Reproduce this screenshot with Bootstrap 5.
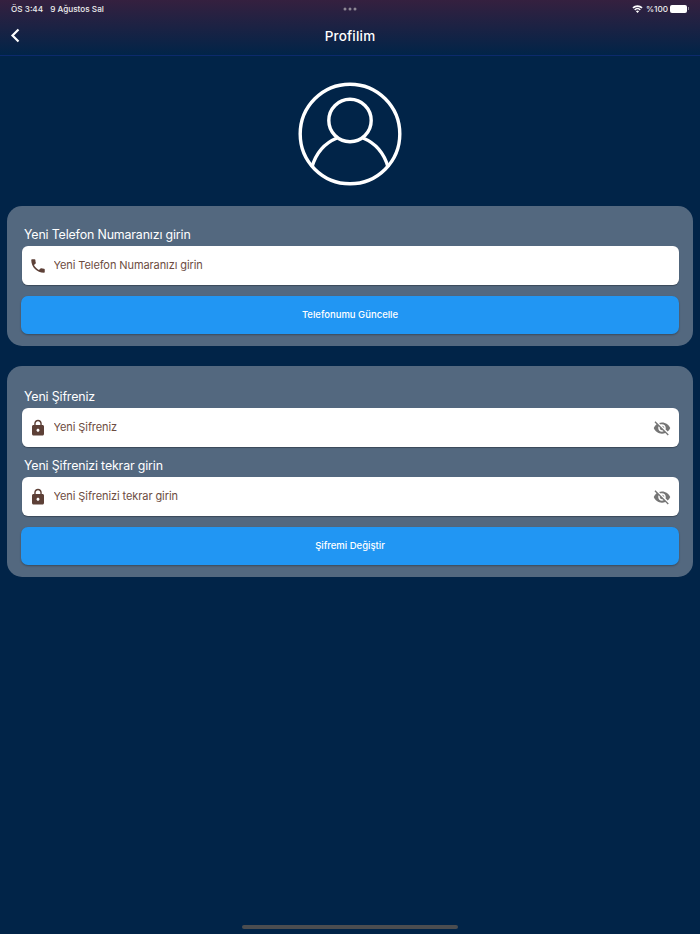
<!DOCTYPE html>
<html lang="tr">
<head>
  <meta charset="UTF-8" />
  <title>Profilim</title>
  <link href="https://cdn.jsdelivr.net/npm/bootstrap@5.3.3/dist/css/bootstrap.min.css" rel="stylesheet" />
  <style>
    html, body { height: 100%; }
    body {
      background-color: #012448;
      color: #fff;
      font-family: Inter, "Liberation Sans", sans-serif;
      overflow: hidden;
    }
    .page-wrap { height: 934px; position: relative; }

    .top-area {
      height: 56px;
      background: linear-gradient(to bottom, #35203f, #012448);
      border-bottom: 1px solid #0c2a6c;
    }
    .status-row { height: 17px; padding: 1px 11px 0; font-size: 8.2px; font-weight: 500; color: #eee; }
    .status-dots { gap: 2px; }
    .status-dots i { display: block; width: 3px; height: 3px; border-radius: 50%; background: #8d8794; }
    .batt-shell { width: 17px; height: 8px; border-radius: 2px; background: #fff; }
    .batt-tip { width: 1px; height: 3px; background: #8d8794; margin-left: 1px; }
    .title-row { height: 38px; position: relative; }
    .page-title { font-size: 13.5px; font-weight: 500; letter-spacing: .2px; }
    .back-link { position: absolute; left: 10px; top: 11px; line-height: 0; }

    .avatar-box { padding-top: 26px; padding-bottom: 20px; line-height: 0; }

    .form-panel {
      margin: 0 7px 20px;
      padding: 20px 14px 12px;
      background: #53687f;
      border-radius: 15px;
    }
    .form-panel.pass-panel { padding-top: 22px; }
    .field-label { font-size: 12.4px; line-height: 18px; letter-spacing: -.15px; padding-left: 3px; margin-bottom: 2px; color: #fff; }
    .field-box {
      height: 39px;
      background: #fff;
      border-radius: 6px;
      padding: 0 7.5px 0 7px;
      margin: 0 .5px 10px;
      box-shadow: 0 1px 1px rgba(0,0,0,.3);
    }
    .field-box.last-field { margin-bottom: 11px; }
    .field-input {
      border: 0;
      outline: 0;
      padding: 0;
      flex: 1;
      min-width: 0;
      margin-left: 7px;
      font-size: 11px;
      letter-spacing: -.09px;
      background: transparent;
      font-family: inherit;
    }
    .field-input::placeholder { color: #6d4c41; opacity: 1; }
    .icon-slot { width: 18px; height: 18px; flex: none; line-height: 0; }
    .action-btn {
      display: block;
      width: 100%;
      height: 38px;
      background: #2196f3;
      border: 0;
      border-radius: 7px;
      color: #fff;
      font-size: 9.5px;
      font-weight: 500;
      box-shadow: 0 1px 2px rgba(0,0,0,.3);
    }
    .action-btn:hover { background: #2196f3; color: #fff; }
    .home-bar {
      position: absolute;
      left: 242px;
      bottom: 5px;
      width: 216px;
      height: 4px;
      border-radius: 2px;
      background: #4b4d50;
    }
  </style>
</head>
<body>
  <div class="page-wrap">

    <div class="top-area">
      <div class="status-row d-flex align-items-center justify-content-between position-relative">
        <div class="d-flex" style="gap:7px"><span>ÖS 3:44</span><span>9 Ağustos Sal</span></div>
        <div class="status-dots d-flex position-absolute top-50 start-50 translate-middle">
          <i></i><i></i><i></i>
        </div>
        <div class="d-flex align-items-center">
          <svg width="11" height="8" viewBox="0 0 11 8" style="margin-right:3px">
            <path d="M5.500 8 3.900 6.200a2.300 2.300 0 0 1 3.200 0zM3.200 5.400 2.200 4.200a4.900 4.900 0 0 1 6.600 0L7.800 5.400a3.400 3.400 0 0 0-4.600 0zM1.500 3.500.4 2.300a7.500 7.500 0 0 1 10.200 0L9.500 3.500a5.900 5.900 0 0 0-8 0z" fill="#fff"/>
          </svg>
          <span>%100</span>
          <div class="batt-shell" style="margin-left:2px"></div>
          <div class="batt-tip"></div>
        </div>
      </div>
      <div class="title-row d-flex align-items-center justify-content-center">
        <a href="#" class="back-link">
          <svg width="11" height="15" viewBox="0 0 11 15"><path d="M8.500 1.500 2.500 7.500l6 6" fill="none" stroke="#fff" stroke-width="2.200"/></svg>
        </a>
        <div class="page-title">Profilim</div>
      </div>
    </div>

    <div class="avatar-box text-center">
      <svg width="104" height="104" viewBox="0 0 104 104" fill="none" stroke="#fff" stroke-width="3.400">
        <circle cx="52" cy="52" r="49.800"/>
        <circle cx="52" cy="38.500" r="21.200"/>
        <path d="M14 85C18 71 27 61 39 56M90 85C86 71 77 61 65 56"/>
      </svg>
    </div>

    <div class="form-panel">
      <div class="field-label">Yeni Telefon Numaranızı girin</div>
      <div class="field-box last-field d-flex align-items-center">
        <span class="icon-slot">
          <svg width="18" height="18" viewBox="0 0 24 24"><path fill="#5d4037" d="M6.600 10.800c1.400 2.800 3.800 5.100 6.600 6.600l2.200-2.200c.3-.3.700-.4 1-.2 1.100.4 2.300.6 3.600.6.600 0 1 .4 1 1V20c0 .6-.4 1-1 1C10.600 21 3 13.400 3 4c0-.6.400-1 1-1h3.500c.6 0 1 .4 1 1 0 1.300.2 2.500.6 3.600.1.300 0 .7-.2 1z"/></svg>
        </span>
        <input class="field-input" type="text" placeholder="Yeni Telefon Numaranızı girin" />
      </div>
      <button class="btn action-btn">Telefonumu Güncelle</button>
    </div>

    <div class="form-panel pass-panel">
      <div class="field-label">Yeni Şifreniz</div>
      <div class="field-box d-flex align-items-center">
        <span class="icon-slot">
          <svg width="18" height="18" viewBox="0 0 24 24"><path fill="#5d4037" d="M18 8h-1V6c0-2.800-2.200-5-5-5S7 3.200 7 6v2H6c-1.100 0-2 .9-2 2v10c0 1.100.9 2 2 2h12c1.100 0 2-.9 2-2V10c0-1.100-.9-2-2-2zm-6 9c-1.100 0-2-.9-2-2s.9-2 2-2 2 .9 2 2-.9 2-2 2zM15.100 8H8.900V6c0-1.700 1.400-3.100 3.100-3.100s3.100 1.400 3.100 3.100z"/></svg>
        </span>
        <input class="field-input" type="password" placeholder="Yeni Şifreniz" />
        <span class="icon-slot">
          <svg width="18" height="18" viewBox="0 0 24 24"><path fill="#757575" d="M12 7c2.760 0 5 2.240 5 5 0 .65-.13 1.260-.36 1.830l2.920 2.920c1.510-1.260 2.700-2.890 3.430-4.750-1.730-4.390-6-7.500-11-7.500-1.400 0-2.740.25-3.980.7l2.160 2.160C10.740 7.130 11.350 7 12 7zM2 4.270l2.280 2.280.46.46C3.080 8.300 1.780 10.020 1 12c1.730 4.390 6 7.500 11 7.500 1.550 0 3.030-.3 4.380-.84l.42.42L19.730 22 21 20.730 3.270 3 2 4.270zM7.530 9.800l1.550 1.550c-.05.21-.08.430-.08.650 0 1.660 1.340 3 3 3 .22 0 .44-.03.65-.08l1.550 1.550c-.67.330-1.410.530-2.200.530-2.760 0-5-2.240-5-5 0-.79.200-1.530.530-2.200zm4.310-.78l3.150 3.150.02-.16c0-1.660-1.340-3-3-3l-.17.010z"/></svg>
        </span>
      </div>
      <div class="field-label">Yeni Şifrenizi tekrar girin</div>
      <div class="field-box last-field d-flex align-items-center">
        <span class="icon-slot">
          <svg width="18" height="18" viewBox="0 0 24 24"><path fill="#5d4037" d="M18 8h-1V6c0-2.800-2.200-5-5-5S7 3.200 7 6v2H6c-1.100 0-2 .9-2 2v10c0 1.100.9 2 2 2h12c1.100 0 2-.9 2-2V10c0-1.100-.9-2-2-2zm-6 9c-1.100 0-2-.9-2-2s.9-2 2-2 2 .9 2 2-.9 2-2 2zM15.100 8H8.900V6c0-1.700 1.400-3.100 3.100-3.100s3.100 1.400 3.100 3.100z"/></svg>
        </span>
        <input class="field-input" type="password" placeholder="Yeni Şifrenizi tekrar girin" />
        <span class="icon-slot">
          <svg width="18" height="18" viewBox="0 0 24 24"><path fill="#757575" d="M12 7c2.760 0 5 2.240 5 5 0 .65-.13 1.260-.36 1.830l2.920 2.920c1.510-1.260 2.700-2.890 3.430-4.750-1.730-4.390-6-7.500-11-7.500-1.400 0-2.740.25-3.980.7l2.160 2.160C10.740 7.130 11.350 7 12 7zM2 4.270l2.280 2.280.46.46C3.080 8.300 1.780 10.020 1 12c1.730 4.390 6 7.500 11 7.500 1.550 0 3.030-.3 4.380-.84l.42.42L19.730 22 21 20.730 3.270 3 2 4.270zM7.530 9.800l1.550 1.550c-.05.21-.08.430-.08.650 0 1.660 1.340 3 3 3 .22 0 .44-.03.65-.08l1.550 1.550c-.67.330-1.410.530-2.200.530-2.760 0-5-2.240-5-5 0-.79.200-1.530.530-2.200zm4.310-.78l3.150 3.150.02-.16c0-1.660-1.340-3-3-3l-.17.010z"/></svg>
        </span>
      </div>
      <button class="btn action-btn">Şifremi Değiştir</button>
    </div>

    <div class="home-bar"></div>
  </div>

  <script src="https://cdn.jsdelivr.net/npm/bootstrap@5.3.3/dist/js/bootstrap.bundle.min.js"></script>
</body>
</html>
